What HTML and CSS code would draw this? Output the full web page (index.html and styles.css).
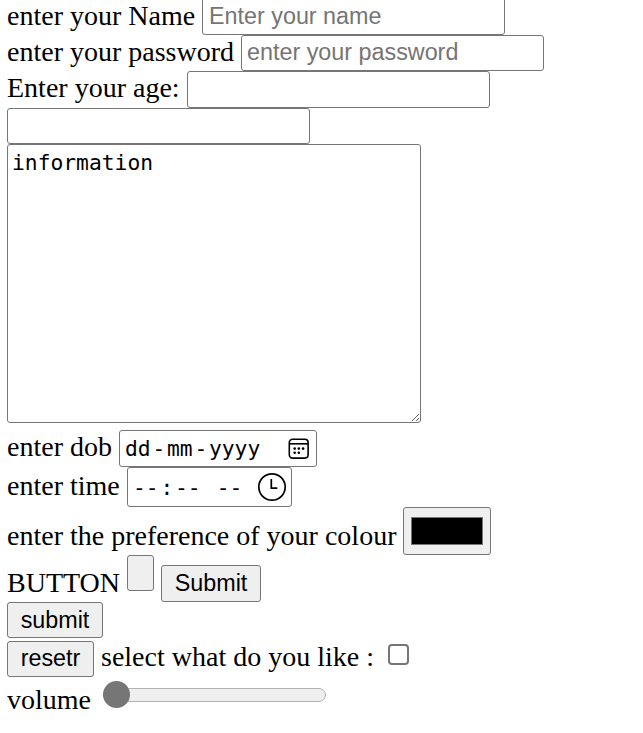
FILE: index.html
```html
<!DOCTYPE html>
<html lang="en">
<head>
<meta charset="utf-8">
<title>Form</title>
<link rel="stylesheet" href="styles.css">
</head>
<body>
<form>
  <div class="row name"><label>enter your Name</label><input class="field" type="text" placeholder="Enter your name"></div>
  <div class="row password"><label>enter your password</label><input class="field" type="password" placeholder="enter your password"></div>
  <div class="row age"><label>Enter your age:</label><input class="field" type="text"></div>
  <div class="row blank"><input class="field" type="text"></div>
  <div class="row info"><textarea>information</textarea></div>
  <div class="row dob"><label>enter dob</label>
    <div class="picker date"><span>dd</span><i>-</i><span>mm</span><i>-</i><span>yyyy</span>
      <svg class="calendar" width="22" height="22" viewBox="0 0 22 22" fill="none" stroke="#000" stroke-width="1.6"><rect x="1.3" y="1.3" width="18.8" height="18.8" rx="3.3"/><path d="M1.3 5.8h18.8"/><g fill="#000" stroke="none"><circle cx="6.7" cy="14.8" r="1.3"/><circle cx="6.7" cy="10.6" r="1.3"/><circle cx="10.8" cy="10.6" r="1.3"/><circle cx="15.1" cy="10.6" r="1.3"/><circle cx="10.8" cy="14.8" r="1.3"/></g></svg>
    </div></div>
  <div class="row time"><label>enter time</label>
    <div class="picker clock-field"><span>--</span><i>:</i><span>--</span><span class="meridiem">--</span>
      <svg class="clock" width="30" height="30" viewBox="0 0 30 30" fill="none" stroke="#000" stroke-width="1.7"><circle cx="15" cy="15" r="13.2"/><path d="M14.3 7v9.2h6"/></svg>
    </div></div>
  <div class="row colour"><label>enter the preference of your colour</label><div class="swatch"><div></div></div></div>
  <div class="row buttons"><label>BUTTON</label><button class="empty" type="button"></button><button class="send" type="button">Submit</button></div>
  <div class="row second"><button type="button">submit</button></div>
  <div class="row likes"><button type="button">resetr</button><label>select what do you like :</label><input class="check" type="checkbox"></div>
  <div class="row volume"><label>volume</label><div class="range"><div class="thumb"></div></div></div>
</form>
</body>
</html>
```
FILE: styles.css
```css
* { box-sizing: border-box; }
html { background: #fff; overflow: hidden; }
body { margin: 0 0 0 7px; color: #000; font: 28px/32px "Liberation Serif", serif; }
.row { display: flex; align-items: flex-start; height: 36px; }
label { flex: none; white-space: pre; }
input, textarea, button { margin: 0; }
.field { width: 303px; height: 36px; padding: 0 6px; border: 1px solid #767676; border-radius: 3px; background: #fff; font: 23.33px "Liberation Sans", sans-serif; outline: 0; }
.field::placeholder { color: #757575; opacity: 1; }
.name { height: 35px; }
.name label { width: 195px; }
.name .field { height: 40px; margin-top: -5px; padding-top: 2px; }
.password label { width: 234px; margin-top: 1px; }
.password .field { padding: 0 5px 2px; }
.age { height: 37px; }
.age label { width: 180px; margin-top: 1px; }
.age .field { height: 37px; }
.info { height: 286px; }
textarea { width: 414px; height: 279px; padding: 4px 4px; border: 1px solid #767676; border-radius: 3px; background: #fff; color: #000; font: 21.3px/27px "DejaVu Sans Mono", monospace; resize: both; }
.dob { height: 37px; }
.dob label { width: 112px; margin-top: 1px; }
.picker { display: flex; align-items: center; border: 1px solid #767676; border-radius: 3px; padding-left: 5px; font: 21.3px/27px "DejaVu Sans Mono", monospace; }
.picker i { font-style: normal; padding: 0 1.75px; }
.date { width: 198px; height: 37px; }
.calendar { margin-left: 28px; }
.time { height: 40px; }
.time label { width: 120px; margin-top: 3px; }
.clock-field { width: 165px; height: 40px; }
.meridiem { margin-left: 16px; }
.clock { margin-left: 15px; }
.colour { height: 48px; }
.colour label { width: 396px; margin-top: 13px; }
.swatch { width: 88px; height: 48px; padding: 9px 7px; border: 1px solid #767676; border-radius: 3px; background: #efefef; }
.swatch div { height: 28px; border: 1px solid #777; background: #000; }
button { height: 36px; padding: 0; border: 1px solid #767676; border-radius: 3px; background: #efefef; color: #000; font: 23.33px "Liberation Sans", sans-serif; }
.buttons { height: 47px; }
.buttons label { width: 120px; margin-top: 12px; }
.empty { width: 27px; }
.send { width: 100px; height: 37px; margin: 10px 0 0 7px; }
.second { height: 39px; }
.second button { width: 96px; }
.likes { height: 43px; }
.likes button { width: 87px; padding-bottom: 2px; }
.likes label { width: 287px; margin-left: 7px; }
.check { appearance: none; width: 21px; height: 21px; margin-top: 3px; margin-left: 0; border: 2px solid #767676; border-radius: 4px; background: #fff; }
.volume label { width: 96px; }
.range { width: 223px; height: 14px; margin-top: 4px; border: 1px solid #b2b2b2; border-radius: 7px; background: #efefef; }
.thumb { width: 27px; height: 27px; margin: -8px 0 0 -1px; border-radius: 50%; background: #767676; }
```
